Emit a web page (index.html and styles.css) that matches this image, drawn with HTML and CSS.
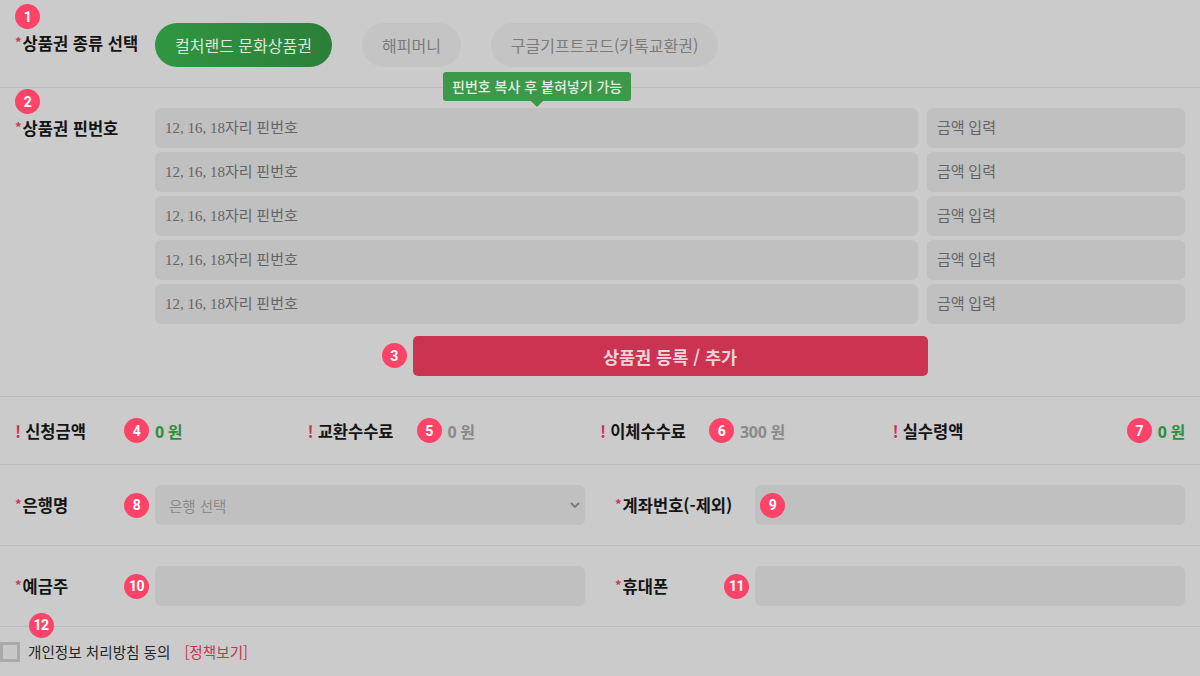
FILE: index.html
```html
<!DOCTYPE html>
<html lang="ko">
<head>
<meta charset="utf-8">
<title>상품권 교환 신청</title>
<link rel="stylesheet" href="styles.css">
</head>
<body>
<div class="form">
  <section class="row row-type">
    <span class="badge badge-1">1</span>
    <div class="label label-type"><span class="req">*</span>상품권 종류 선택</div>
    <div class="pills">
      <button class="pill pill-on">컬처랜드 문화상품권</button>
      <button class="pill">해피머니</button>
      <button class="pill">구글기프트코드(카톡교환권)</button>
    </div>
  </section>

  <section class="row row-pin">
    <span class="badge badge-2">2</span>
    <div class="label label-tall"><span class="req">*</span>상품권 핀번호</div>
    <div class="pin-area">
      <div class="tooltip">핀번호 복사 후 붙혀넣기 가능</div>
      <div class="pin-list">
        <div class="pin-row"><input class="field pin" placeholder="12, 16, 18자리 핀번호"><input class="field amount" placeholder="금액 입력"></div>
        <div class="pin-row"><input class="field pin" placeholder="12, 16, 18자리 핀번호"><input class="field amount" placeholder="금액 입력"></div>
        <div class="pin-row"><input class="field pin" placeholder="12, 16, 18자리 핀번호"><input class="field amount" placeholder="금액 입력"></div>
        <div class="pin-row"><input class="field pin" placeholder="12, 16, 18자리 핀번호"><input class="field amount" placeholder="금액 입력"></div>
        <div class="pin-row"><input class="field pin" placeholder="12, 16, 18자리 핀번호"><input class="field amount" placeholder="금액 입력"></div>
      </div>
      <div class="submit">
        <button class="submit-btn"><span class="badge badge-3">3</span>상품권 등록 / 추가</button>
      </div>
    </div>
  </section>

  <section class="row summary">
    <div class="sum-item">
      <div class="sum-label"><span class="bang">!</span>신청금액</div>
      <div class="sum-value green"><span class="badge badge-v">4</span>0 원</div>
    </div>
    <div class="sum-item">
      <div class="sum-label"><span class="bang">!</span>교환수수료</div>
      <div class="sum-value gray"><span class="badge badge-v">5</span>0 원</div>
    </div>
    <div class="sum-item">
      <div class="sum-label"><span class="bang">!</span>이체수수료</div>
      <div class="sum-value gray"><span class="badge badge-v">6</span>300 원</div>
    </div>
    <div class="sum-item">
      <div class="sum-label"><span class="bang">!</span>실수령액</div>
      <div class="sum-value green push"><span class="badge badge-v">7</span>0 원</div>
    </div>
  </section>

  <section class="row pair">
    <div class="fld">
      <div class="label"><span class="req">*</span>은행명</div>
      <div class="ctl">
        <span class="badge badge-v">8</span>
        <div class="field select">
          <span>은행 선택</span>
          <svg class="chev" width="10" height="6" viewBox="0 0 10 6"><path d="M1 1 L5 5 L9 1" fill="none" stroke="#7a7a7a" stroke-width="1.8"/></svg>
        </div>
      </div>
    </div>
    <div class="fld">
      <div class="label"><span class="req">*</span>계좌번호(-제외)</div>
      <div class="ctl">
        <span class="badge badge-in">9</span>
        <input class="field" aria-label="계좌번호">
      </div>
    </div>
  </section>

  <section class="row pair">
    <div class="fld">
      <div class="label"><span class="req">*</span>예금주</div>
      <div class="ctl">
        <span class="badge badge-v">10</span>
        <input class="field" aria-label="예금주">
      </div>
    </div>
    <div class="fld">
      <div class="label"><span class="req">*</span>휴대폰</div>
      <div class="ctl">
        <span class="badge badge-v">11</span>
        <input class="field" aria-label="휴대폰">
      </div>
    </div>
  </section>

  <div class="agree">
    <span class="badge badge-12">12</span>
    <span class="check"></span>
    <span class="agree-text">개인정보 처리방침 동의</span>
    <a class="policy">[정책보기]</a>
  </div>
</div>
</body>
</html>
```

FILE: styles.css
```css
html, body {
  margin: 0;
  padding: 0;
}
body {
  width: 1200px;
  height: 676px;
  overflow: hidden;
  background: #cbcbcb;
  font-family: "Noto Sans CJK KR", "Noto Sans", sans-serif;
  color: #161616;
}
.form {
  display: flex;
  flex-direction: column;
}
.row {
  position: relative;
  display: flex;
  padding: 20px 15px;
  border-bottom: 1px solid #bdbdbd;
}
.label {
  width: 140px;
  flex: none;
  font-size: 16.5px;
  font-weight: 700;
  color: #141414;
  white-space: nowrap;
}
.req {
  color: #c93a54;
  font-size: 13px;
  position: relative;
  top: -3px;
  margin-right: 1px;
}
.badge {
  position: absolute;
  width: 25px;
  height: 25px;
  border-radius: 50%;
  background: #fd4468;
  color: #fff;
  font-family: Roboto, "Noto Sans", sans-serif;
  font-weight: 700;
  font-size: 14px;
  letter-spacing: -0.5px;
  display: flex;
  align-items: center;
  justify-content: center;
  line-height: 1;
}

/* row 1 */
.row-type {
  padding-top: 23px;
  align-items: center;
}
.label-type { padding-bottom: 4px; }
.badge-1 { left: 15px; top: 4px; }
.pills {
  display: flex;
  gap: 30px;
}
.pill {
  height: 44px;
  padding: 0 20px;
  border: none;
  border-radius: 22px;
  background: #c4c4c4;
  color: #7b7b7b;
  font-family: "Noto Sans CJK KR", sans-serif;
  font-size: 16px;
}
.pill-on {
  background: linear-gradient(90deg, #309641, #2b7f38);
  color: #dde8dd;
}

/* row 2 */
.badge-2 { left: 15px; top: 1px; }
.label-tall { line-height: 40px; }
.pin-area {
  position: relative;
  flex: 1;
}
.tooltip {
  position: absolute;
  left: 288px;
  top: -36px;
  height: 29px;
  padding: 0 9px;
  border-radius: 3px;
  background: #3c994a;
  color: #e4ece4;
  font-size: 14px;
  font-weight: 500;
  line-height: 29px;
  white-space: nowrap;
}
.tooltip::after {
  content: "";
  position: absolute;
  left: 50%;
  bottom: -6px;
  margin-left: -6px;
  border-left: 6px solid transparent;
  border-right: 6px solid transparent;
  border-top: 6px solid #3c994a;
}
.pin-list {
  display: flex;
  flex-direction: column;
  gap: 4px;
}
.pin-row {
  display: flex;
  gap: 9px;
}
.field {
  box-sizing: border-box;
  height: 40px;
  border: none;
  border-radius: 6px;
  background: #c0c0c0;
  padding: 0 10px;
  font-family: "Liberation Serif", "Noto Sans CJK KR", serif;
  font-size: 15px;
  color: #333;
  outline: none;
}
.field::placeholder {
  color: #656565;
}
.pin { flex: 1; min-width: 0; }
.amount { width: 258px; flex: none; }
.submit {
  display: flex;
  justify-content: center;
  margin-top: 12px;
}
.submit-btn {
  position: relative;
  width: 515px;
  height: 40px;
  border: none;
  border-radius: 5px;
  background: #cc3350;
  color: #ecd3d8;
  font-family: "Noto Sans CJK KR", sans-serif;
  font-size: 17.5px;
  font-weight: 700;
}
.badge-3 { left: -31px; top: 7px; }

/* summary */
.summary {
  height: 68px;
  box-sizing: border-box;
  padding: 0 15px;
  align-items: center;
}
.sum-item {
  flex: 1;
  display: flex;
  align-items: center;
}
.sum-label {
  width: 140px;
  flex: none;
  font-size: 16.5px;
  font-weight: 700;
  color: #141414;
}
.bang {
  color: #cc3350;
  margin-right: 4px;
}
.sum-value {
  position: relative;
  font-family: "Noto Sans", "Noto Sans CJK KR", sans-serif;
  font-size: 16px;
  font-weight: 700;
  letter-spacing: -0.3px;
}
.sum-value.green { color: #2e8f3d; }
.sum-value.gray { color: #8a8a8a; }
.push { margin-left: auto; }
.badge-v { left: -31px; top: 50%; margin-top: -12.5px; }

/* pair rows */
.pair {
  display: grid;
  grid-template-columns: 1fr 1fr;
  column-gap: 30px;
}
.fld {
  display: flex;
  align-items: center;
}
.ctl {
  position: relative;
  flex: 1;
  display: flex;
}
.ctl .field { flex: 1; min-width: 0; }
.badge-in { left: 5px; top: 7.5px; }
.select {
  display: flex;
  align-items: center;
  justify-content: space-between;
  padding: 0 5px 0 14px;
  font-family: "Noto Sans CJK KR", sans-serif;
  font-size: 14.5px;
  color: #8b8b8b;
}

/* agree */
.agree {
  position: relative;
  display: flex;
  align-items: center;
  padding-top: 14px;
  font-size: 14.6px;
}
.badge-12 { left: 28.5px; top: -14.5px; }
.check {
  box-sizing: border-box;
  width: 20px;
  height: 20px;
  border: 3px solid #a9a9a9;
  background: #c7c7c7;
  margin-right: 8px;
}
.agree-text {
  color: #262626;
}
.policy {
  color: #cc3350;
  margin-left: 14px;
}
```
